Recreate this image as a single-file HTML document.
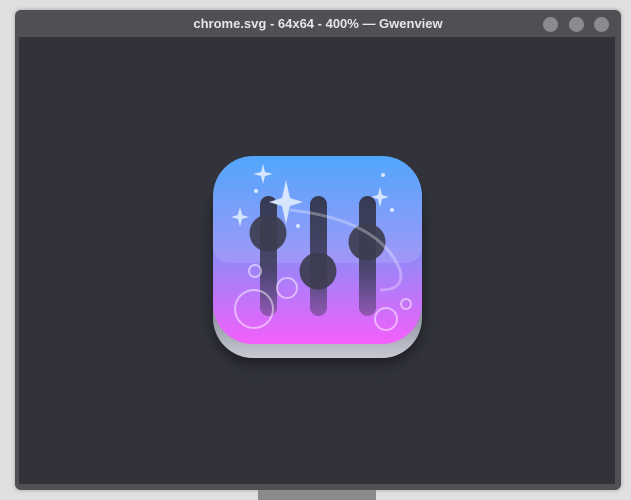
<!DOCTYPE html>
<html><head><style>
body{margin:0;width:631px;height:500px;background:#e0e0e0;overflow:hidden;position:relative;font-family:"Liberation Sans",sans-serif}
.win{position:absolute;left:15px;top:10px;width:606px;height:480px;background:#4f5054;border-radius:6px;box-shadow:0 0 4px rgba(0,0,0,.3)}
.title{position:absolute;left:0;right:0;top:6px;text-align:center;color:#e6e6e6;font-size:13px;font-weight:bold}
.dot{position:absolute;top:7px;width:15px;height:15px;border-radius:50%;background:#8a8b8e}
.content{position:absolute;left:4px;top:27px;width:596px;height:447px;background:#31323a}
.stand{position:absolute;left:258px;top:490px;width:118px;height:10px;background:#8a8a8a}
</style></head><body>
<div class="win">
<div class="title">chrome.svg - 64x64 - 400% — Gwenview</div>
<div class="dot" style="left:528px"></div><div class="dot" style="left:554px"></div><div class="dot" style="left:579px"></div>
<div class="content"></div>
</div>
<div class="stand"></div>
<svg style="position:absolute;left:0;top:0" width="631" height="500">
<defs>
<linearGradient id="g" x1="0" y1="0" x2="0" y2="1"><stop offset="0" stop-color="#3a9afc"/><stop offset=".5" stop-color="#8a8cf8"/><stop offset="1" stop-color="#f45ffc"/></linearGradient>
<linearGradient id="b" x1="0" y1="0" x2="0" y2="1"><stop offset="0" stop-color="#4a4e62"/><stop offset=".75" stop-color="#8a8d9e"/><stop offset="1" stop-color="#c8c9d2"/></linearGradient>
<linearGradient id="s" x1="0" y1="0" x2="0" y2="1"><stop offset="0" stop-color="#34344a" stop-opacity=".95"/><stop offset=".6" stop-color="#34344a" stop-opacity=".8"/><stop offset="1" stop-color="#34344a" stop-opacity=".4"/></linearGradient>
<filter id="sh"><feGaussianBlur stdDeviation="6"/></filter>
</defs>
<rect x="213" y="176" width="209" height="188" rx="40" fill="#000" opacity=".4" filter="url(#sh)"/>
<rect x="213" y="170" width="209" height="188" rx="40" fill="url(#b)"/>
<rect x="213" y="156" width="209" height="188" rx="40" fill="url(#g)"/>
<path d="M213 196 a40 40 0 0 1 40 -40 h129 a40 40 0 0 1 40 40 v50 q0 17 -20 17 h-169 q-20 0 -20 -17z" fill="#fff" opacity=".12"/>
<g fill="url(#s)">
<rect x="260" y="196" width="17" height="120" rx="8.5"/>
<rect x="310" y="196" width="17" height="120" rx="8.5"/>
<rect x="359" y="196" width="17" height="120" rx="8.5"/>
</g>
<g fill="#3d3d50" opacity=".92">
<circle cx="268" cy="233" r="18.5"/><circle cx="318" cy="271" r="18.5"/><circle cx="367" cy="242" r="18.5"/>
</g>
<path d="M290 210 q90 10 110 60 q5 20 -20 20" stroke="#fff" stroke-opacity=".3" stroke-width="3" fill="none"/>
<g fill="none" stroke="#fff" stroke-opacity=".5" stroke-width="2">
<circle cx="254" cy="309" r="19"/><circle cx="287" cy="288" r="10"/><circle cx="255" cy="271" r="6"/><circle cx="386" cy="319" r="11"/><circle cx="406" cy="304" r="5"/>
</g>
<g fill="#d6e6ff">
<path d="M263 164 l2 8 8 2 -8 2 -2 8 -2 -8 -8 -2 8 -2z"/>
<path d="M286 180 l4 18 13 4 -13 4 -4 18 -4 -18 -13 -4 13 -4z"/>
<path d="M240 207 l2 8 7 2 -7 2 -2 8 -2 -8 -7 -2 7 -2z"/>
<path d="M380 187 l2 8 7 2 -7 2 -2 8 -2 -8 -7 -2 7 -2z"/>
<circle cx="256" cy="191" r="2"/><circle cx="383" cy="175" r="2"/><circle cx="392" cy="210" r="2"/><circle cx="298" cy="226" r="2"/>
</g>
</svg>
</body></html>
